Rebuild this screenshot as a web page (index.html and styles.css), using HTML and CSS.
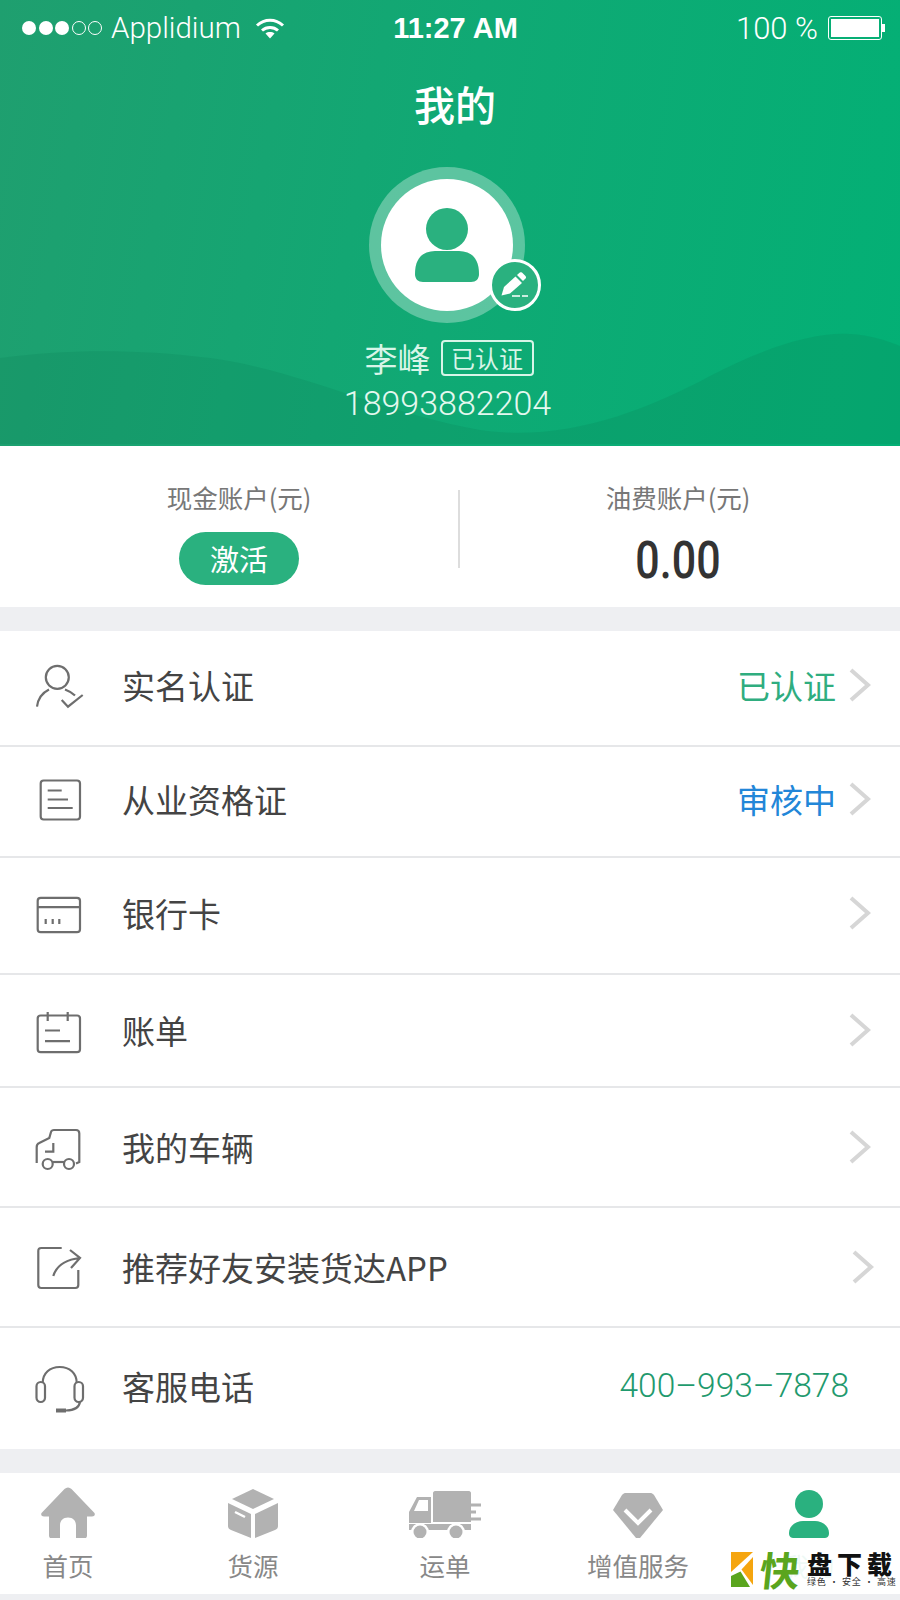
FILE: index.html
```html
<!DOCTYPE html>
<html lang="zh-CN">
<head>
  <meta charset="UTF-8">
  <meta name="viewport" content="width=device-width, initial-scale=1.0">
  <title>我的</title>
  <link rel="stylesheet" href="styles.css">
</head>
<body>
  <!-- Cabecera verde -->
  <header class="header">
    <svg class="waves" viewBox="0 0 900 446" preserveAspectRatio="none">
      <path d="M0 358C60 350 130 348 210 358C300 370 380 412 480 430C560 442 640 414 710 376C760 350 810 332 850 334C870 335 885 340 900 346V444H0Z" fill="#0B7F57" opacity=".2"/>
    </svg>

    <div class="status-bar">
      <div class="status-left">
        <span class="signal">
          <i class="dot"></i><i class="dot"></i><i class="dot"></i><i class="dot dot-off"></i><i class="dot dot-off"></i>
        </span>
        <span class="carrier">Applidium</span>
        <svg class="wifi" viewBox="0 0 30 22">
          <path d="M2 8.500C9.500 1.500 20.500 1.500 28 8.500" fill="none" stroke="#fff" stroke-width="3"/>
          <path d="M7 13.500C11.500 9.500 18.500 9.500 23 13.500" fill="none" stroke="#fff" stroke-width="3"/>
          <path d="M10.500 16.500C13 14.600 17 14.600 19.500 16.500L15 21.500Z" fill="#fff"/>
        </svg>
      </div>
      <span class="clock">11:27 AM</span>
      <div class="status-right">
        <span class="percent">100 %</span>
        <span class="battery"><span class="battery-fill"></span></span>
        <span class="battery-tip"></span>
      </div>
    </div>

    <h1 class="title">我的</h1>

    <div class="avatar">
      <div class="avatar-inner">
        <svg class="avatar-person" viewBox="0 0 64 74">
          <circle cx="32" cy="21" r="21" fill="#2AB17F"/>
          <path d="M0 66C0 46 12 43 22 43H42C52 43 64 46 64 66C64 71 61 74 56 74H8C3 74 0 71 0 66Z" fill="#2AB17F"/>
        </svg>
      </div>
      <div class="edit-badge">
        <svg viewBox="0 0 32 28">
          <path d="M2.500 24.500L5 16L16.500 5.500L23 12L11 22.500Z" fill="#fff"/>
          <path d="M18 4L20.500 1.800C22 1 23 1.200 23.500 2L26.500 5C27.500 6.500 27 7.200 26 8L24 10Z" fill="#fff"/>
          <path d="M13 25H21M23 25H29" stroke="#fff" stroke-width="1.500" fill="none"/>
        </svg>
      </div>
    </div>

    <div class="name-row">
      <span class="user-name">李峰</span>
      <span class="verified-tag">已认证</span>
    </div>
    <div class="phone">18993882204</div>
  </header>

  <!-- Cuentas -->
  <section class="accounts">
    <div class="account account-cash">
      <p class="account-label">现金账户(元)</p>
      <div class="activate-button">激活</div>
    </div>
    <div class="account-divider"></div>
    <div class="account account-fuel">
      <p class="account-label">油费账户(元)</p>
      <p class="account-amount">0.00</p>
    </div>
  </section>

  <!-- Menú -->
  <section class="menu">
    <div class="menu-row">
      <svg class="menu-icon" viewBox="0 0 50 48">
        <circle cx="22.300" cy="13.300" r="11.500"/>
        <path d="M2 42.700C3 34 7 29 14 25.500M30 25.500C34 27 37.500 29 40 31.500"/>
        <path d="M26.700 36L33 42.700L47.700 31"/>
      </svg>
      <span class="menu-text">实名认证</span>
      <span class="menu-status status-green">已认证</span>
      <svg class="chevron" viewBox="0 0 22 34"><path d="M2 2L19 17L2 32"/></svg>
    </div>
    <div class="menu-row">
      <svg class="menu-icon" viewBox="0 0 50 48">
        <rect x="5.700" y="2.500" width="39.300" height="39" rx="3"/>
        <path d="M12.700 12.500H26.700M12.700 21.500H33M12.700 30H37.700"/>
      </svg>
      <span class="menu-text">从业资格证</span>
      <span class="menu-status status-blue">审核中</span>
      <svg class="chevron" viewBox="0 0 22 34"><path d="M2 2L19 17L2 32"/></svg>
    </div>
    <div class="menu-row">
      <svg class="menu-icon" viewBox="0 0 50 48">
        <rect x="2.700" y="5.800" width="42.300" height="34.400" rx="3"/>
        <path d="M2.700 15.200H45M10.700 27V32M17.700 27V32M24.300 27V32"/>
      </svg>
      <span class="menu-text">银行卡</span>
      <svg class="chevron" viewBox="0 0 22 34"><path d="M2 2L19 17L2 32"/></svg>
    </div>
    <div class="menu-row menu-row-flat">
      <svg class="menu-icon" viewBox="0 0 50 48">
        <rect x="2.700" y="8.500" width="42.300" height="36.700" rx="3"/>
        <path d="M12.700 5V14M32.700 5V14M10 23.500H25M10 34.200H35"/>
      </svg>
      <span class="menu-text">账单</span>
      <svg class="chevron" viewBox="0 0 22 34"><path d="M2 2L19 17L2 32"/></svg>
    </div>
    <div class="menu-row menu-row-flat">
      <svg class="menu-icon" viewBox="0 0 50 48">
        <path d="M1.700 40V24C1.700 22 3 20.500 4.300 20L14.300 15L16 9C16.500 7.500 17 7 19 7H41C43.500 7 44.300 8 44.300 10.500V39L41 40.500"/>
        <path d="M18.300 20V28.700H10"/>
        <circle cx="12.700" cy="41" r="5"/>
        <circle cx="34" cy="41" r="5"/>
        <path d="M17.700 39H29"/>
      </svg>
      <span class="menu-text">我的车辆</span>
      <svg class="chevron" viewBox="0 0 22 34"><path d="M2 2L19 17L2 32"/></svg>
    </div>
    <div class="menu-row menu-row-flat">
      <svg class="menu-icon" viewBox="0 0 50 48">
        <path d="M26.700 5H6.300C4 5 3.300 6 3.300 8V42C3.300 44 4 45 6.300 45H40.300C42.500 45 43.300 44 43.300 42V27"/>
        <path d="M18.300 33C21 24 28 17 45 15M35 7L45 15L36 25"/>
      </svg>
      <span class="menu-text">推荐好友安装货达APP</span>
      <svg class="chevron chevron-shifted" viewBox="0 0 22 34"><path d="M2 2L19 17L2 32"/></svg>
    </div>
    <div class="menu-row">
      <svg class="menu-icon" viewBox="0 0 50 48">
        <path d="M7.700 18C7.700 8 15 2 24.700 2C34.500 2 41.700 8 41.700 18"/>
        <rect x="1.500" y="17" width="8.500" height="20" rx="4.200"/>
        <rect x="39.500" y="17" width="8.500" height="20" rx="4.200"/>
        <path d="M45 37C44 43 39 45.500 31 45.500"/>
        <path d="M21 45.500H31" stroke-width="4"/>
      </svg>
      <span class="menu-text">客服电话</span>
      <span class="menu-phone">400–993–7878</span>
    </div>
  </section>

  <!-- Barra inferior -->
  <nav class="tab-bar">
    <div class="tab">
      <svg class="tab-icon" width="54" viewBox="0 -1.500 54 52">
        <path d="M27 0C28.500 0 30 1 31 2L53 25C55 27 53 29 51 29H46V48C46 50 45 51 43 51H35V38C35 33 32 30 27 30C22 30 19 33 19 38V51H11C9 51 8 50 8 48V29H3C1 29 -1 27 1 25L23 2C24 1 25.500 0 27 0Z" fill="#b2b2b2"/>
      </svg>
      <span class="tab-label">首页</span>
    </div>
    <div class="tab">
      <svg class="tab-icon" width="50" viewBox="0 -3 50 52">
        <path d="M25 0L46 10L25 20L4 10Z" fill="#b2b2b2"/>
        <path d="M0 14L23 25V49L3 41C1 40 0 39 0 37Z" fill="#b2b2b2"/>
        <path d="M50 14L27 25V49L47 41C49 40 50 39 50 37Z" fill="#b2b2b2"/>
        <path d="M7 23L17 28" stroke="#fff" stroke-width="2.500" fill="none"/>
      </svg>
      <span class="tab-label">货源</span>
    </div>
    <div class="tab">
      <svg class="tab-icon" width="72" viewBox="0 -4 72 52">
        <path d="M24 3C24 2 25 1 26 1H60C61 1 62 2 62 3V32H24Z" fill="#b2b2b2"/>
        <path d="M8 7H22V33H0V22ZM10 10L5 21H19V10Z" fill="#b2b2b2" fill-rule="evenodd"/>
        <path d="M0 34H62V40H0Z" fill="#b2b2b2"/>
        <circle cx="11" cy="42" r="9" fill="#fff"/>
        <circle cx="47" cy="42" r="9" fill="#fff"/>
        <circle cx="11" cy="42" r="6.500" fill="#b2b2b2"/>
        <circle cx="47" cy="42" r="6.500" fill="#b2b2b2"/>
        <path d="M62 15H72M62 22H67M62 29H72" stroke="#b2b2b2" stroke-width="3" fill="none"/>
      </svg>
      <span class="tab-label">运单</span>
    </div>
    <div class="tab">
      <svg class="tab-icon" width="50" viewBox="0 -7 50 52">
        <path d="M12 0H38C39 0 40 1 41 2L50 17L27 45C26 46 24 46 23 45L0 17L9 2C10 1 11 0 12 0Z" fill="#b2b2b2"/>
        <path d="M12 17L25 30L38 17" stroke="#fff" stroke-width="4" fill="none"/>
      </svg>
      <span class="tab-label">增值服务</span>
    </div>
    <div class="tab">
      <svg class="tab-icon" width="40" viewBox="0 -4 40 52">
        <circle cx="20" cy="14" r="14" fill="#2AB17F"/>
        <path d="M0 43C0 35 8 31 14 31H26C32 31 40 35 40 43C40 47 38 48 35 48H5C2 48 0 47 0 43Z" fill="#2AB17F"/>
      </svg>
      <span class="tab-label tab-label-active">我的</span>
    </div>
    <!-- Sello del sitio de descargas -->
    <div class="watermark">
      <svg class="watermark-logo" viewBox="0 0 23 35">
        <path d="M0 0H22L0 20Z" fill="#F5A50F"/>
        <path d="M22 5L10.500 17.500L22 33Z" fill="#F5A50F"/>
        <path d="M0 35V24L9.500 19.500L19 35Z" fill="#5AA51E"/>
      </svg>
      <span class="watermark-fast">快</span>
      <div class="watermark-name">
        <span class="watermark-title">盘下载</span>
        <span class="watermark-sub">绿色 · 安全 · 高速</span>
      </div>
    </div>
  </nav>
  <div class="bottom-strip"></div>
</body>
</html>
```
FILE: styles.css
```css
/* Estilos generales */
body {
  margin: 0;
  padding: 0;
  width: 900px;
  height: 1600px;
  overflow: hidden;
  background-color: #EEEFF2;
  font-family: "Noto Sans CJK SC", "Liberation Sans", sans-serif;
  color: #444;
}

p, h1 {
  margin: 0;
}

/* Cabecera */
.header {
  position: relative;
  height: 446px;
  display: flex;
  flex-direction: column;
  align-items: center;
  color: #FFF;
  background: linear-gradient(100deg, #1F9F6F 0%, #10A974 50%, #03B075 100%);
}

.waves {
  position: absolute;
  top: 0;
  left: 0;
  width: 100%;
  height: 100%;
}

.status-bar {
  position: relative;
  box-sizing: border-box;
  width: 100%;
  height: 56px;
  padding: 0 15px 0 22px;
  display: flex;
  align-items: center;
  justify-content: space-between;
  font-family: "Liberation Sans", sans-serif;
  font-size: 29px;
}

.status-left, .status-right {
  width: 300px;
  display: flex;
  align-items: center;
}

.status-right {
  justify-content: flex-end;
}

.signal {
  display: flex;
  gap: 2.5px;
  margin-right: 9px;
}

.dot {
  box-sizing: border-box;
  width: 14px;
  height: 14px;
  border-radius: 50%;
  background-color: #FFF;
}

.dot-off {
  background-color: transparent;
  border: 1px solid #FFF;
}

.carrier {
  font-family: Roboto, sans-serif;
  font-weight: 300;
  font-size: 29.5px;
}

.wifi {
  width: 30px;
  height: 22px;
  margin-left: 14px;
}

.clock {
  margin-left: 4px;
  font-weight: bold;
  font-size: 29px;
}

.percent {
  font-family: Roboto, sans-serif;
  font-weight: 300;
  font-size: 31px;
  margin-right: 10px;
}

.battery {
  box-sizing: border-box;
  width: 54px;
  height: 24px;
  border: 1px solid #FFF;
  border-radius: 3px;
  padding: 2px;
  display: flex;
}

.battery-fill {
  flex: 1;
  background-color: #FFF;
}

.battery-tip {
  width: 3px;
  height: 8px;
  background-color: #FFF;
}

.title {
  position: relative;
  margin: 17px 0 0 10px;
  font-size: 41px;
  font-weight: 500;
  line-height: 60px;
}

/* Avatar */
.avatar {
  position: relative;
  margin: 34px 6px 0 0;
  width: 156px;
  height: 156px;
  padding: 12px;
  box-sizing: border-box;
  border-radius: 50%;
  background-color: rgba(255, 255, 255, 0.32);
}

.avatar-inner {
  width: 100%;
  height: 100%;
  border-radius: 50%;
  background-color: #FFF;
  display: flex;
  align-items: center;
  justify-content: center;
}

.avatar-person {
  width: 64px;
  height: 74px;
}

.edit-badge {
  position: absolute;
  right: -16px;
  bottom: 12px;
  box-sizing: border-box;
  width: 52px;
  height: 52px;
  border: 3px solid #FFF;
  border-radius: 50%;
  background-color: #2AB17F;
  display: flex;
  align-items: center;
  justify-content: center;
}

.edit-badge svg {
  flex: none;
  width: 32px;
  height: 28px;
}

.name-row {
  position: relative;
  display: flex;
  align-items: center;
  gap: 10px;
  margin-top: 12px;
  margin-right: 2px;
  color: #D8F5E8;
}

.user-name {
  font-size: 33px;
  line-height: 46px;
}

.verified-tag {
  box-sizing: border-box;
  width: 93px;
  height: 36px;
  border: 2px solid #D8F5E8;
  border-radius: 4px;
  font-size: 24px;
  line-height: 31px;
  text-align: center;
}

.phone {
  position: relative;
  font-family: Roboto, sans-serif;
  font-weight: 300;
  font-size: 34px;
  line-height: 40px;
  margin: 2px 5px 0 0;
  color: #E4F8EF;
}

/* Cuentas */
.accounts {
  height: 161px;
  display: grid;
  grid-template-columns: 458px 2px 1fr;
  background-color: #FFF;
}

.account {
  padding-top: 31px;
  display: flex;
  flex-direction: column;
  align-items: center;
}

.account-cash {
  padding-left: 20px;
}

.account-fuel {
  padding-right: 4px;
}

.account-label {
  font-size: 25.5px;
  line-height: 40px;
  color: #777;
}

.activate-button {
  width: 120px;
  height: 53px;
  margin-top: 15px;
  border-radius: 27px;
  background-color: #2AB17F;
  color: #FFF;
  font-size: 29px;
  line-height: 52px;
  text-align: center;
}

.account-divider {
  width: 2px;
  height: 78px;
  margin-top: 44px;
  background-color: #DDD;
}

.account-amount {
  margin-top: 13px;
  font-family: Roboto, sans-serif;
  font-weight: 500;
  font-size: 43px;
  line-height: 60px;
  color: #333;
  transform: scaleY(1.22);
}

/* Menú */
.menu {
  margin-top: 24px;
  height: 818px;
  display: grid;
  grid-template-rows: 116px 111px 117px 113px 120px 120px 121px;
  background-color: #FFF;
}

.menu-row {
  display: flex;
  align-items: center;
  padding-left: 35px;
  padding-right: 29px;
  border-bottom: 2px solid #E6E7E9;
}

.menu-row:last-child {
  border-bottom: none;
}

.menu-icon {
  flex: none;
  width: 50px;
  height: 48px;
  margin-right: 37px;
  fill: none;
  stroke: #6E6E6E;
  stroke-width: 2.2;
}

.menu-text {
  flex: 1;
  font-size: 33px;
}

.menu-text, .menu-status, .chevron {
  margin-bottom: 6px;
}

.menu-row-flat .menu-text, .menu-row-flat .chevron {
  margin-bottom: 1px;
}

.menu-status {
  font-size: 33px;
  margin-right: 13px;
}

.status-green {
  color: #2FAD7F;
}

.status-blue {
  color: #2286D8;
}

.chevron {
  width: 22px;
  height: 34px;
  fill: none;
  stroke: #D6D6D6;
  stroke-width: 4;
}

.chevron-shifted {
  margin-right: -3px;
}

.menu-phone {
  margin-bottom: 6px;
  font-family: Roboto, sans-serif;
  font-size: 33.5px;
  font-weight: 300;
  color: #1F9A6E;
  margin-right: 22px;
}

/* Barra inferior */
.tab-bar {
  position: relative;
  box-sizing: border-box;
  margin-top: 24px;
  height: 121px;
  display: grid;
  grid-template-columns: 136px 234px 150px 236px 106px;
  background-color: #FFF;
}

.tab {
  display: flex;
  flex-direction: column;
  align-items: center;
  padding-top: 13px;
}

.tab-icon {
  height: 52px;
}

.tab-label {
  margin-top: 9px;
  font-size: 25.5px;
  line-height: 36px;
  color: #888;
  white-space: nowrap;
}

.tab-label-active {
  color: #2AB17F;
}

.watermark {
  position: absolute;
  left: 731px;
  top: 78px;
  width: 165px;
  height: 37px;
  display: flex;
  align-items: center;
  background-color: rgba(255, 255, 255, 0.92);
}

.watermark-logo {
  flex: none;
  width: 23px;
  height: 35px;
}

.watermark-fast {
  flex: none;
  margin-left: 6px;
  font-size: 40px;
  font-weight: 700;
  line-height: 37px;
  color: #5AA51E;
  transform: skewX(-6deg);
}

.watermark-name {
  flex: none;
  width: 89px;
  margin-left: 7px;
  display: flex;
  flex-direction: column;
  align-items: flex-start;
  color: #111;
}

.watermark-title {
  font-size: 25px;
  font-weight: 900;
  line-height: 25px;
  letter-spacing: 5px;
  white-space: nowrap;
}

.watermark-sub {
  font-size: 9px;
  line-height: 12px;
  letter-spacing: .8px;
  white-space: nowrap;
  color: #333;
}

.bottom-strip {
  height: 6px;
}
```
